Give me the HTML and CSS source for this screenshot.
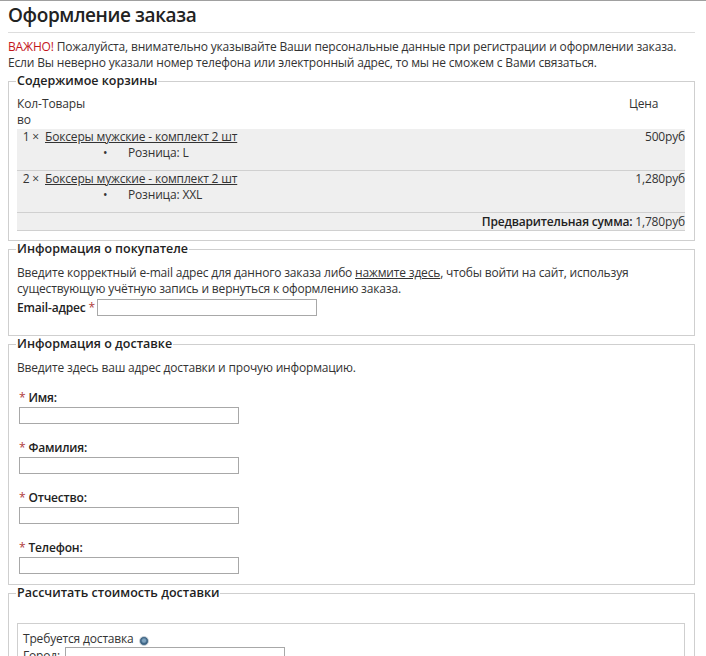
FILE: index.html
```html
<!DOCTYPE html>
<html lang="ru">
<head>
<meta charset="utf-8">
<title>Оформление заказа</title>
<link rel="stylesheet" href="styles.css">
</head>
<body>
<div class="page">
  <h1 class="title">Оформление заказа</h1>
  <div class="notice">
    <span class="important">ВАЖНО!</span> Пожалуйста, внимательно указывайте Ваши персональные данные при регистрации и оформлении заказа.<br>
    Если Вы неверно указали номер телефона или электронный адрес, то мы не сможем с Вами связаться.
  </div>

  <fieldset class="pane">
    <legend>Содержимое корзины</legend>
    <table class="cart">
      <thead>
        <tr>
          <th class="qty-h">Кол-во</th>
          <th class="prod-h">Товары</th>
          <th class="price-h">Цена</th>
        </tr>
      </thead>
      <tbody>
        <tr class="item">
          <td class="qty">1 ×</td>
          <td class="prod">
            <a href="#">Боксеры мужские - комплект 2 шт</a>
            <ul class="attrs"><li>Розница: L</li></ul>
          </td>
          <td class="price">500руб</td>
        </tr>
        <tr class="item">
          <td class="qty">2 ×</td>
          <td class="prod">
            <a href="#">Боксеры мужские - комплект 2 шт</a>
            <ul class="attrs"><li>Розница: XXL</li></ul>
          </td>
          <td class="price">1,280руб</td>
        </tr>
        <tr class="total">
          <td colspan="3"><b>Предварительная сумма:</b> 1,780руб</td>
        </tr>
      </tbody>
    </table>
  </fieldset>

  <fieldset class="pane">
    <legend>Информация о покупателе</legend>
    <div class="desc">Введите корректный e-mail адрес для данного заказа либо <a href="#">нажмите здесь</a>, чтобы войти на сайт, используя существующую учётную запись и вернуться к оформлению заказа.</div>
    <div class="email-row">
      <label class="strong">Email-адрес <span class="req">*</span></label><input class="field email" type="text">
    </div>
  </fieldset>

  <fieldset class="pane">
    <legend>Информация о доставке</legend>
    <div class="desc">Введите здесь ваш адрес доставки и прочую информацию.</div>
    <div class="fields">
      <div class="frow"><label class="strong"><span class="req">*</span> Имя:</label><input class="field" type="text"></div>
      <div class="frow"><label class="strong"><span class="req">*</span> Фамилия:</label><input class="field" type="text"></div>
      <div class="frow"><label class="strong"><span class="req">*</span> Отчество:</label><input class="field" type="text"></div>
      <div class="frow"><label class="strong"><span class="req">*</span> Телефон:</label><input class="field" type="text"></div>
    </div>
  </fieldset>

  <fieldset class="pane last">
    <legend>Рассчитать стоимость доставки</legend>
    <div class="quote">
      <div class="need">Требуется доставка <span class="radio"></span></div>
      <div class="city"><span>Город:</span><input class="field" type="text"></div>
    </div>
  </fieldset>
</div>
</body>
</html>
```
FILE: styles.css
```css
html, body {
  margin: 0;
  padding: 0;
  background: #fff;
}
body {
  border-top: 1px solid #a0a0a0;
  font-family: "Open Sans", "Noto Sans", sans-serif;
  font-size: 12px;
  line-height: 16px;
  letter-spacing: -0.17px;
  color: #333;
  overflow: hidden;
  height: 655px;
}
.page {
  width: 687px;
  margin-left: 8px;
}
.title {
  margin: 0;
  padding: 2px 0 5px;
  font-size: 19px;
  line-height: 24px;
  font-weight: 600;
  letter-spacing: -0.4px;
  color: #222;
  border-bottom: 1px solid #ddd;
}
.notice {
  margin-top: 6px;
}
.important {
  color: #c4161c;
}
a {
  color: #333;
  text-decoration: underline;
}
.pane {
  margin: 2px 0 0;
  padding: 7px 9px 9px 8px;
  border: 1px solid #cfcfcf;
  min-width: 0;
}
.pane + .pane {
  margin-top: 0;
}
.pane legend {
  padding: 0 1px;
  margin-left: -1px;
  font-weight: 600;
  font-size: 12.5px;
  letter-spacing: 0;
  color: #222;
}
.cart {
  width: 100%;
  border-collapse: collapse;
}
.cart th {
  font-weight: normal;
  text-align: left;
  padding: 0 0 1px;
  vertical-align: top;
}
.qty-h { width: 25px; }
.price-h { width: 56px; }
.item td {
  background: #efefef;
  vertical-align: top;
  padding: 0 0 9px;
  border-bottom: 1px solid #d0d0d0;
}
.cart .qty {
  text-align: right;
  padding-right: 3px;
  white-space: nowrap;
}
.cart .prod {
  padding-left: 3px;
}
.cart .price {
  text-align: right;
}
.attrs {
  list-style: none;
  margin: 0;
  padding: 0 0 0 58px;
}
.attrs li::before {
  content: "•";
  display: inline-block;
  width: 25px;
}
.total td {
  background: #efefef;
  text-align: right;
  padding: 1px 0 0;
  border-bottom: 1px solid #d0d0d0;
}
.total b { font-weight: 600; color: #222; }
.desc {
  margin-top: 1px;
}
.strong {
  font-weight: 600;
  color: #222;
}
.req {
  color: #b03a3a;
  font-weight: normal;
}
.email-row {
  display: flex;
  align-items: flex-end;
  margin-top: 2px;
  margin-bottom: 10px;
}
.field {
  box-sizing: border-box;
  height: 17px;
  width: 220px;
  margin: 0;
  border: 1px solid #a8a8a8;
  padding: 0 2px;
  font: inherit;
  background: #fff;
}
.field.email {
  width: 220px;
  margin-left: 2px;
}
.fields {
  display: flex;
  flex-direction: column;
  gap: 16px;
  margin-top: 14px;
  padding-left: 2px;
  margin-bottom: 1px;
}
.frow {
  display: flex;
  flex-direction: column;
  align-items: flex-start;
  gap: 0;
}
.frow .field {
  margin-top: 1px;
}
.last {
  padding-bottom: 40px;
}
.quote {
  margin-top: 15px;
  border: 1px solid #cfcfcf;
  padding: 7px 5px 0;
}
.need {
  display: flex;
  align-items: center;
  gap: 5px;
}
.radio {
  display: inline-block;
  box-sizing: border-box;
  width: 10px;
  height: 10px;
  border-radius: 50%;
  background: radial-gradient(circle at 50% 45%, #7ea3bf 0 1.5px, #3e6585 3px);
  border: 1px solid #c3ccd3;
  margin-top: 4px;
}
.city {
  display: flex;
  align-items: center;
  gap: 5px;
}
.city .field { width: 220px; }
```
